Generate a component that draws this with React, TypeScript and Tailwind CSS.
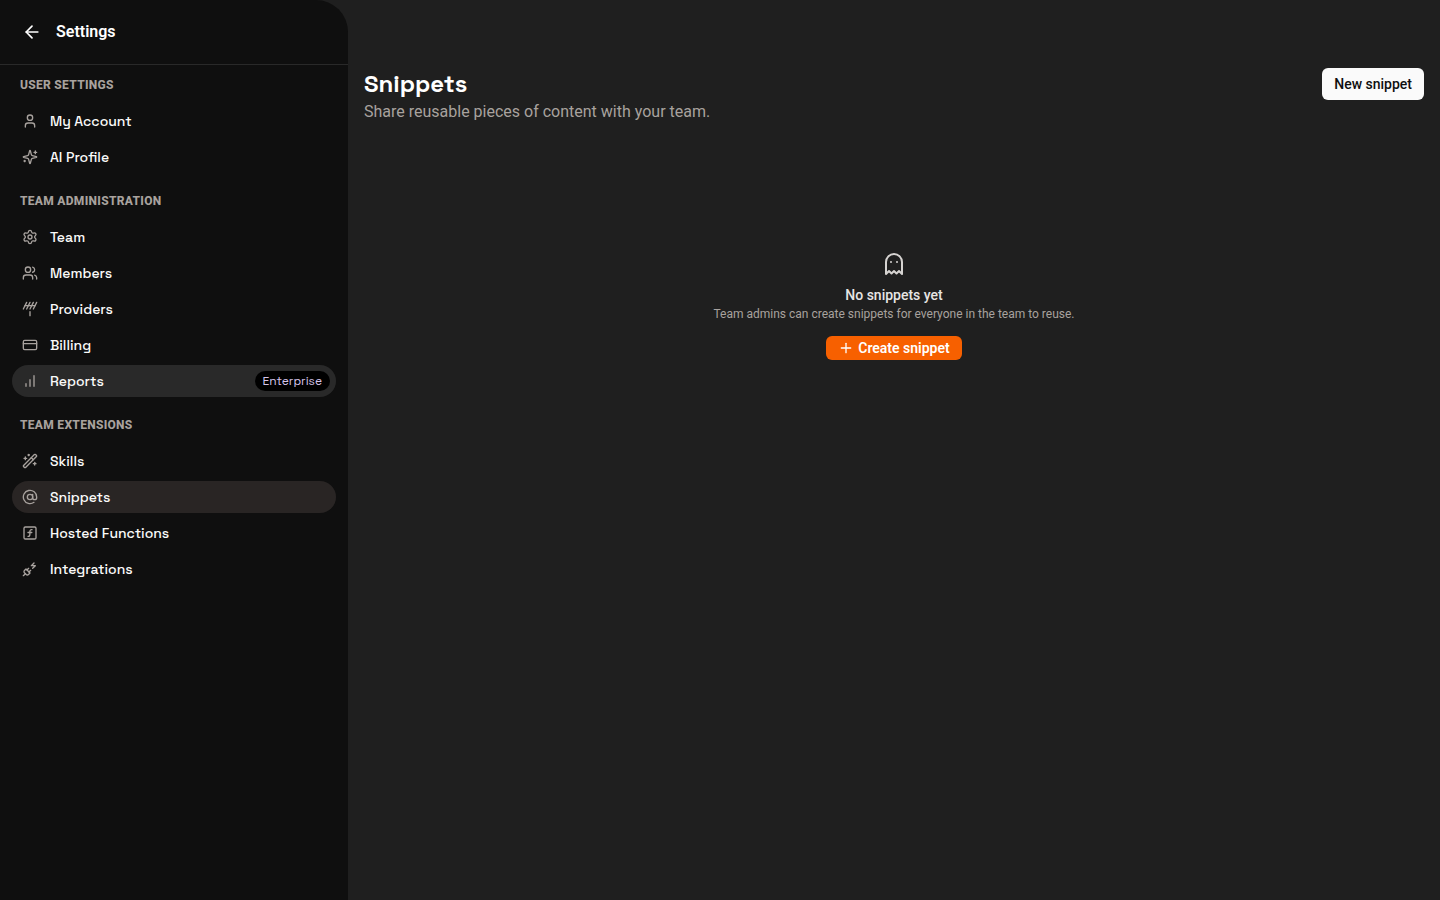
import React from 'react'
import {
  Antenna,
  ArrowLeft,
  AtSign,
  CreditCard,
  Ghost,
  PlugZap,
  Plus,
  Settings,
  SquareFunction,
  User,
  Users,
  WandSparkles,
} from 'lucide-react'

type IconProps = { className?: string }
type Item = { label: string; icon: React.ElementType; state?: 'hover' | 'active'; badge?: string }

const SparklesIcon = ({ className }: IconProps) => (
  <svg viewBox="0 0 24 24" fill="none" stroke="currentColor" strokeWidth={2} strokeLinecap="round" strokeLinejoin="round" className={className} aria-hidden="true">
    <path d="M9.937 15.5A2 2 0 0 0 8.5 14.063l-6.135-1.582a.5.5 0 0 1 0-.962L8.5 9.936A2 2 0 0 0 9.937 8.5l1.582-6.135a.5.5 0 0 1 .963 0L14.063 8.5A2 2 0 0 0 15.5 9.937l6.135 1.581a.5.5 0 0 1 0 .964L15.5 14.063a2 2 0 0 0-1.437 1.437l-1.582 6.135a.5.5 0 0 1-.963 0z" />
    <path d="M20 3v4M22 5h-4M4 17v2M5 18H3" />
  </svg>
)

const BarsIcon = ({ className }: IconProps) => (
  <svg viewBox="0 0 24 24" fill="none" stroke="currentColor" strokeWidth={2} strokeLinecap="round" className={className} aria-hidden="true">
    <path d="M6 20v-4M12 20V10M18 20V4" />
  </svg>
)

const sections: { title: string; items: Item[] }[] = [
  {
    title: 'User settings',
    items: [
      { label: 'My Account', icon: User },
      { label: 'AI Profile', icon: SparklesIcon },
    ],
  },
  {
    title: 'Team administration',
    items: [
      { label: 'Team', icon: Settings },
      { label: 'Members', icon: Users },
      { label: 'Providers', icon: Antenna },
      { label: 'Billing', icon: CreditCard },
      { label: 'Reports', icon: BarsIcon, state: 'hover', badge: 'Enterprise' },
    ],
  },
  {
    title: 'Team extensions',
    items: [
      { label: 'Skills', icon: WandSparkles },
      { label: 'Snippets', icon: AtSign, state: 'active' },
      { label: 'Hosted Functions', icon: SquareFunction },
      { label: 'Integrations', icon: PlugZap },
    ],
  },
]

const itemBg = {
  hover: 'bg-[#292929]',
  active: 'bg-[#292524]',
  none: 'hover:bg-[#292929]',
}

const NavItem = ({ label, icon: Icon, state, badge }: Item) => (
  <a
    href="#"
    aria-current={state === 'active' ? 'page' : undefined}
    className={['flex h-8 items-center gap-3 rounded-full pl-2.5 pr-1.5', itemBg[state || 'none']].join(' ')}
  >
    <Icon className="size-4 shrink-0 text-[#a8a29e]" />
    <span className="flex-1 font-['Space_Grotesk','Inter',sans-serif] text-sm font-medium text-[#fafaf9]">{label}</span>
    {badge && (
      <span className="flex h-5 items-center rounded-full bg-black px-2 font-['Space_Grotesk','Inter',sans-serif] text-xs text-[#d6c4ea]">
        {badge}
      </span>
    )}
  </a>
)

const Sidebar = () => (
  <aside className="w-[348px] shrink-0 rounded-tr-[32px] bg-[#0f0f0f]">
    <header className="flex h-[65px] items-center gap-3.5 border-b border-[#292929] px-5.5">
      <a href="#" aria-label="Back">
        <ArrowLeft className="size-5" />
      </a>
      <h2 className="text-base font-semibold text-white">Settings</h2>
    </header>
    <nav className="flex flex-col gap-4 px-3 pt-2">
      {sections.map((section) => (
        <section key={section.title}>
          <h3 className="flex h-6 items-center px-2 text-xs font-extrabold uppercase tracking-wide text-[#a8a29e]">{section.title}</h3>
          <div className="mt-2 flex flex-col gap-1">
            {section.items.map((item) => (
              <NavItem key={item.label} {...item} />
            ))}
          </div>
        </section>
      ))}
    </nav>
  </aside>
)

const EmptyState = () => (
  <div className="mt-32 flex flex-col items-center text-center">
    <Ghost className="size-6 text-[#d6d3d1]" />
    <p className="mt-2 text-sm leading-[22px] font-medium text-[#e7e5e4]">No snippets yet</p>
    <p className="text-xs leading-4 text-[#a8a29e]">Team admins can create snippets for everyone in the team to reuse.</p>
    <button className="mt-3.5 flex h-6 items-center gap-1 rounded-md bg-[#f76000] px-3 text-sm font-semibold text-white">
      <Plus className="size-4" />
      Create snippet
    </button>
  </div>
)

export default function App() {
  return (
    <div className="flex min-h-screen bg-[#1f1f1f] font-['Roboto',sans-serif] text-white">
      <Sidebar />
      <main className="min-w-0 flex-1 px-4 pt-17">
        <div className="flex items-start justify-between gap-4">
          <div>
            <h1 className="font-['Space_Grotesk','Inter',sans-serif] text-2xl leading-8 font-bold">Snippets</h1>
            <p className="text-base text-[#a8a29e]">Share reusable pieces of content with your team.</p>
          </div>
          <button className="h-8 rounded-md bg-[#fafafa] px-3 text-sm font-medium text-[#0f0f0f]">New snippet</button>
        </div>
        <EmptyState />
      </main>
    </div>
  )
}
